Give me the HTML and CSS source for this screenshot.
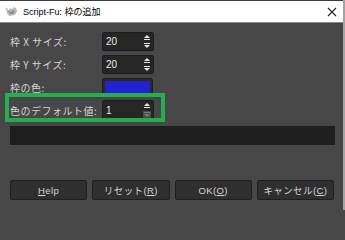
FILE: index.html
```html
<!DOCTYPE html>
<html lang="ja">
<head>
<meta charset="utf-8">
<title>Script-Fu: 枠の追加</title>
<link rel="stylesheet" href="styles.css">
</head>
<body>
<div class="win">
  <div class="titlebar">
    <svg class="appicon" width="13" height="11" viewBox="0 0 13 11">
      <path d="M1 3 L4 4 L5 2 L7 3 L9 1 L11 2 L12 5 L10 9 L4 10 L2 7 Z" fill="#b9b9b9"/>
      <path d="M3 5 L6 6 L8 4 L10 6 L8 8 L5 8 Z" fill="#8e8e8e"/>
      <path d="M0 2 L3 3" stroke="#c8c8c8" stroke-width="1"/>
    </svg>
    <span class="title">Script-Fu: 枠の追加</span>
    <svg class="close" width="10" height="10" viewBox="0 0 10 10">
      <path d="M1 1 L9 9 M9 1 L1 9" stroke="#222" stroke-width="1.1"/>
    </svg>
  </div>
  <div class="body">
    <div class="form">
      <div class="label">枠 X サイズ:</div>
      <div class="spin">
        <span class="val">20</span>
        <span class="arrows">
          <svg class="arr" width="8" height="7" viewBox="0 0 8 7"><path d="M1 4 L4 1 L7 4 Z" fill="#e6e6e6"/><rect x="1" y="5" width="6" height="1" fill="#e6e6e6"/></svg>
          <svg class="arr" width="8" height="7" viewBox="0 0 8 7"><rect x="1" y="1" width="6" height="1" fill="#e6e6e6"/><path d="M1 3 L4 6 L7 3 Z" fill="#e6e6e6"/></svg>
        </span>
      </div>
      <div class="label">枠 Y サイズ:</div>
      <div class="spin">
        <span class="val">20</span>
        <span class="arrows">
          <svg class="arr" width="8" height="7" viewBox="0 0 8 7"><path d="M1 4 L4 1 L7 4 Z" fill="#e6e6e6"/><rect x="1" y="5" width="6" height="1" fill="#e6e6e6"/></svg>
          <svg class="arr" width="8" height="7" viewBox="0 0 8 7"><rect x="1" y="1" width="6" height="1" fill="#e6e6e6"/><path d="M1 3 L4 6 L7 3 Z" fill="#e6e6e6"/></svg>
        </span>
      </div>
      <div class="label">枠の色:</div>
      <div class="colorbtn"><span class="swatch"></span></div>
      <div class="label">色のデフォルト値:</div>
      <div class="spin">
        <span class="val">1</span>
        <span class="arrows">
          <svg class="arr" width="8" height="7" viewBox="0 0 8 7"><path d="M1 4 L4 1 L7 4 Z" fill="#e6e6e6"/><rect x="1" y="5" width="6" height="1" fill="#e6e6e6"/></svg>
          <svg class="arr off" width="8" height="7" viewBox="0 0 8 7"><rect x="1" y="1" width="6" height="1" fill="#7a7a7a"/><path d="M1 3 L4 6 L7 3 Z" fill="#7a7a7a"/></svg>
        </span>
      </div>
    </div>
    <div class="highlight"></div>
    <div class="field"></div>
    <div class="buttons">
      <div class="btn"><span class="u">H</span>elp</div>
      <div class="btn">リセット(<span class="u">R</span>)</div>
      <div class="btn">OK(<span class="u">O</span>)</div>
      <div class="btn">キャンセル(<span class="u">C</span>)</div>
    </div>
  </div>
</div>
</body>
</html>
```

FILE: styles.css
```css
html, body {
  margin: 0;
  padding: 0;
  background: #474747;
}
.win {
  width: 343px;
  height: 210px;
  border-right: 2px solid #a3a3a3;
  display: flex;
  flex-direction: column;
  background: #474747;
  font-family: "Liberation Sans", "Noto Sans CJK JP", sans-serif;
}
.titlebar {
  height: 21px;
  border-top: 1px solid #3c3c3c;
  border-bottom: 1px solid #8a8a8a;
  background: #ffffff;
  display: flex;
  align-items: center;
  padding-left: 5px;
}
.appicon {
  margin-right: 5px;
}
.title {
  font-size: 9px;
  color: #000;
  flex: 1;
  font-family: "Liberation Sans", "Noto Sans CJK JP", sans-serif;
}
.close {
  margin-right: 6px;
}
.body {
  position: relative;
  flex: 1;
  display: flex;
  flex-direction: column;
  padding: 0 8px 0 10px;
}
.form {
  display: grid;
  grid-template-columns: 92px 52px;
  grid-template-rows: 19px 19px 18px 20px;
  row-gap: 4px;
  margin-top: 9px;
  align-items: center;
}
.label {
  font-family: "Noto Sans CJK JP", sans-serif;
  font-size: 10px;
  letter-spacing: 0.5px;
  color: #d4d4d4;
  white-space: nowrap;
}
.spin {
  height: 100%;
  box-sizing: border-box;
  background: #262626;
  border: 1px solid #1c1c1c;
  border-radius: 2px;
  display: flex;
  align-items: center;
}
.val {
  flex: 1;
  padding-left: 3px;
  font-family: "Liberation Sans", sans-serif;
  font-size: 10px;
  color: #ececec;
}
.arrows {
  width: 11px;
  height: 100%;
  box-sizing: border-box;
  padding: 1px 0;
  display: flex;
  flex-direction: column;
  justify-content: space-between;
  align-items: center;
  margin-right: 1px;
}
.arr {
  display: block;
}
.arr.off {
  background: #4a4a4a;
}
.colorbtn {
  height: 100%;
  box-sizing: border-box;
  border: 1px solid #1e1e1e;
  border-radius: 2px;
  background: #2a2a2a;
  padding: 2px;
  display: flex;
  margin-right: 1px;
}
.swatch {
  flex: 1;
  background: #2222d2;
}
.highlight {
  position: absolute;
  left: 5px;
  top: 70px;
  width: 152px;
  height: 21px;
  border: 4px solid #22b04a;
}
.field {
  margin-top: 6px;
  height: 19px;
  background: #1e1e1e;
}
.buttons {
  margin-top: 35px;
  display: grid;
  grid-template-columns: repeat(4, 1fr);
  column-gap: 5px;
  padding-right: 1px;
}
.btn {
  height: 20px;
  box-sizing: border-box;
  background: #2f2f2f;
  border: 1px solid #1f1f1f;
  border-radius: 2px;
  display: flex;
  align-items: center;
  justify-content: center;
  font-family: "Liberation Sans", "Noto Sans CJK JP", sans-serif;
  font-size: 9.5px;
  letter-spacing: 0.4px;
  color: #d6d6d6;
  white-space: nowrap;
}
.u {
  text-decoration: underline;
}
```
